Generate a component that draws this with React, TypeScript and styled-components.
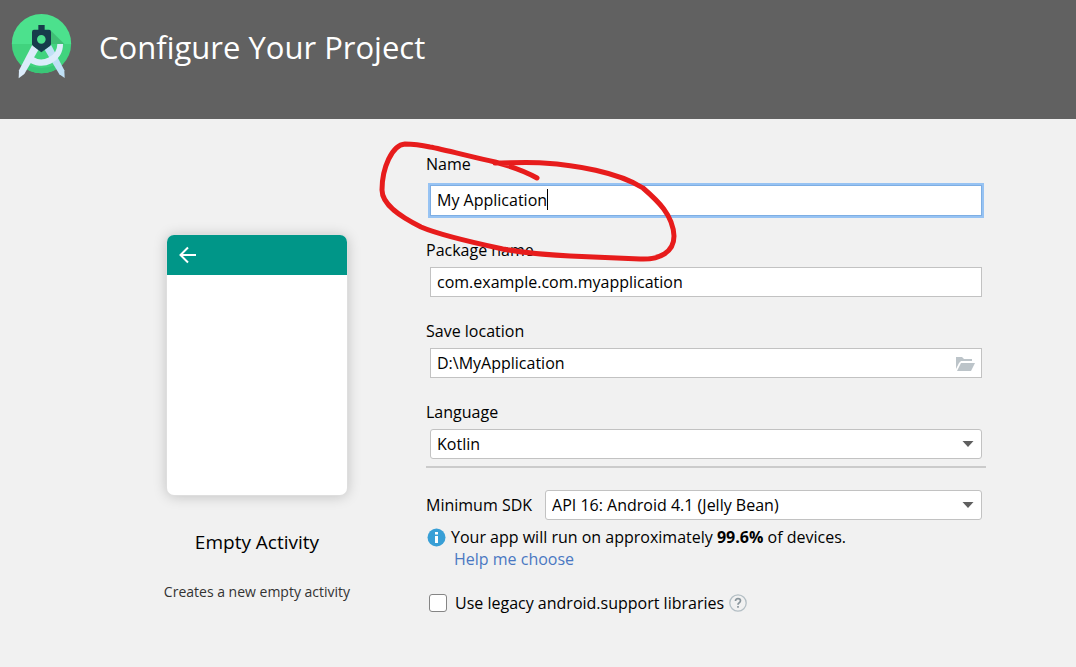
import React from "react";
import styled, { createGlobalStyle, css } from "styled-components";

const GlobalStyle = createGlobalStyle`
  *, *::before, *::after { box-sizing: border-box; }
  html, body, #root { min-height: 100vh; }
  body {
    margin: 0;
    background: #f1f1f1;
    color: #000;
    font: 16px/24px "Open Sans", "Noto Sans", sans-serif;
  }
`;

const Header = styled.header`
  display: flex;
  align-items: flex-start;
  gap: 24px;
  height: 119px;
  padding: 12px 10px;
  background: #616161;
`;

const Title = styled.h1`
  margin: 12px 0 0;
  color: #fff;
  font-size: 31px;
  font-weight: 400;
  line-height: 46px;
`;

const Main = styled.main`
  display: flex;
  gap: 59px;
  padding: 33px 90px 24px 147px;
`;

const Preview = styled.section`
  display: flex;
  flex-direction: column;
  align-items: center;
  flex: 0 0 220px;
  padding-top: 83px;
  text-align: center;
`;

const Phone = styled.div`
  width: 180px;
  height: 260px;
  overflow: hidden;
  border-radius: 7px;
  background: #fff;
  box-shadow: 0 0 0 1px #dedede, 0 1px 14px rgba(0, 0, 0, 0.22);
`;

const PhoneBar = styled.div`
  display: flex;
  align-items: center;
  height: 40px;
  padding-left: 12px;
  background: #009688;
`;

const ActivityName = styled.h2`
  margin: 33px 0 0;
  font-size: 19px;
  font-weight: 400;
  line-height: 28px;
`;

const ActivityNote = styled.p`
  margin: 26px 0 0;
  color: #333;
  font-size: 14px;
  line-height: 20px;
  white-space: nowrap;
`;

const Form = styled.form`
  position: relative;
  display: flex;
  flex-direction: column;
  flex: 1;
  min-width: 0;
`;

const Group = styled.div`
  display: flex;
  flex-direction: column;
  gap: 5px;
  margin-bottom: 22px;

  &:first-child { gap: 9px; }
  &:nth-of-type(4) { margin-bottom: 0; }
`;

const Label = styled.label`
  white-space: nowrap;
`;

const Control = styled.div`
  position: relative;
  display: flex;
  flex: 1;
  min-width: 0;
  margin: 0 4px;
`;

const controlBox = css`
  width: 100%;
  height: 30px;
  padding: 0 6px;
  border: 1px solid #c2c2c2;
  outline: none;
  background: #fff;
  color: #000;
  font: inherit;
`;

const TextInput = styled.input<{ $active?: boolean }>`
  ${controlBox}
  padding-bottom: 1px;
  ${(p) =>
    p.$active &&
    css`
      height: 31px;
      padding-bottom: 2px;
      border-color: #7eaee3;
      box-shadow: 0 0 0 2px #97c3f3;
    `}
`;

const Select = styled.select`
  ${controlBox}
  appearance: none;
  border-radius: 3px;
`;

const Caret = styled.span`
  position: absolute;
  top: 4px;
  left: 117px;
  width: 1px;
  height: 21px;
  background: #000;
`;

const Arrow = styled.svg`
  position: absolute;
  top: 11px;
  right: 8px;
  pointer-events: none;
`;

const BrowseButton = styled.button`
  position: absolute;
  top: 8px;
  right: 7px;
  display: flex;
  padding: 0;
  border: 0;
  background: none;
`;

const Divider = styled.hr`
  width: 100%;
  height: 2px;
  margin: 7px 0 22px;
  border: 0;
  background: #cbcbcb;
`;

const SdkRow = styled.div`
  display: flex;
  align-items: center;
  gap: 9px;
`;

const InfoRow = styled.p`
  display: flex;
  align-items: center;
  gap: 5px;
  margin: 5px 0 0 1px;
`;

const HelpLink = styled.a`
  align-self: flex-start;
  margin-left: 28px;
  color: #4a78c2;
  line-height: 20px;
  text-decoration: none;
`;

const LegacyRow = styled.div`
  display: flex;
  align-items: center;
  margin: 22px 0 0 3px;
`;

const Checkbox = styled.input`
  appearance: none;
  width: 18px;
  height: 18px;
  margin: 0 8px 0 0;
  border: 1px solid #858585;
  border-radius: 3px;
  background: #fff;
`;

const HelpButton = styled.button`
  display: flex;
  margin-left: 5px;
  padding: 0;
  border: 0;
  background: none;
`;

const Scribble = styled.svg`
  position: absolute;
  top: -18px;
  left: -50px;
  pointer-events: none;
`;

const Logo = () => (
  <svg width="65" height="68" viewBox="30 36 195 204" aria-hidden="true">
    <defs>
      <clipPath id="disc">
        <circle cx="124.500" cy="131" r="89" />
      </clipPath>
    </defs>
    <g clipPath="url(#disc)">
      <rect x="30" y="36" width="195" height="96" fill="#4ce18d" />
      <rect x="30" y="132" width="195" height="96" fill="#41d37e" />
      <path d="M153 92L193 132H153Z" fill="#3fbf75" />
      <path d="M84 196Q124 212 164 196L174 214Q124 232 76 212Z" fill="#3ac777" />
    </g>
    <path d="M134 149L153 134 193 211 194 234 178 223Z" fill="#bfe0f5" />
    <path d="M97 134L115 150 73 222 56 235 57 211Z" fill="#dcecfa" />
    <path
      d="M189 132A65 64 0 0 1 84 184L96 169A48 46 0 0 0 172 132Z"
      fill="#dcecfa"
    />
    <path
      fillRule="evenodd"
      d="M115 75H134V89H147Q153 89 153 96V132Q153 136 149 139L124 157 100 139Q96 136 96 132V96Q96 89 102 89H115ZM124 105A13 13 0 1 0 124 131A13 13 0 1 0 124 105Z"
      fill="#173c4b"
    />
  </svg>
);

const DropArrow = () => (
  <Arrow width="12" height="8" viewBox="0 0 12 8" aria-hidden="true">
    <path d="M0.500 1H11.500L6 7Z" fill="#5f5f5f" />
  </Arrow>
);

export default function App() {
  return (
    <>
      <GlobalStyle />
      <Header>
        <Logo />
        <Title>Configure Your Project</Title>
      </Header>
      <Main>
        <Preview>
          <Phone>
            <PhoneBar>
              <svg width="18" height="18" viewBox="0 0 18 18" fill="none" stroke="#fff" strokeWidth="2" aria-hidden="true">
                <path d="M17 9H2.500M9 1.500L1.500 9L9 16.500" />
              </svg>
            </PhoneBar>
          </Phone>
          <ActivityName>Empty Activity</ActivityName>
          <ActivityNote>Creates a new empty activity</ActivityNote>
        </Preview>
        <Form onSubmit={(e) => e.preventDefault()}>
          <Group>
            <Label htmlFor="name">Name</Label>
            <Control>
              <TextInput id="name" $active defaultValue="My Application" />
              <Caret />
            </Control>
          </Group>
          <Group>
            <Label htmlFor="package">Package name</Label>
            <Control>
              <TextInput id="package" defaultValue="com.example.com.myapplication" />
            </Control>
          </Group>
          <Group>
            <Label htmlFor="location">Save location</Label>
            <Control>
              <TextInput id="location" defaultValue={"D:\\MyApplication"} />
              <BrowseButton type="button" aria-label="Browse">
                <svg width="19" height="16" viewBox="0 0 19 16" fill="#bcc4c9" aria-hidden="true">
                  <path d="M0 1H6L8 3H16V5H5L3 7L0 13Z" />
                  <path d="M5 7H19L15 15H1Z" />
                </svg>
              </BrowseButton>
            </Control>
          </Group>
          <Group>
            <Label htmlFor="language">Language</Label>
            <Control>
              <Select id="language" defaultValue="Kotlin">
                <option>Kotlin</option>
                <option>Java</option>
              </Select>
              <DropArrow />
            </Control>
          </Group>
          <Divider />
          <SdkRow>
            <Label htmlFor="sdk">Minimum SDK</Label>
            <Control>
              <Select id="sdk">
                <option>API 16: Android 4.1 (Jelly Bean)</option>
              </Select>
              <DropArrow />
            </Control>
          </SdkRow>
          <InfoRow>
            <svg width="19" height="19" viewBox="0 0 19 19" aria-hidden="true">
              <circle cx="9.500" cy="9.500" r="9" fill="#389fd6" />
              <path d="M8 4H11V6.500H8ZM8 8H11V15H8Z" fill="#fff" />
            </svg>
            <span>
              Your app will run on approximately <b>99.6%</b> of devices.
            </span>
          </InfoRow>
          <HelpLink href="#help">Help me choose</HelpLink>
          <LegacyRow>
            <Checkbox type="checkbox" id="legacy" />
            <Label htmlFor="legacy">Use legacy android.support libraries</Label>
            <HelpButton type="button" aria-label="Help">
              <svg width="18" height="18" viewBox="0 0 18 18" fill="none" aria-hidden="true">
                <circle cx="9" cy="9" r="8.200" stroke="#b4bfc5" strokeWidth="1.300" />
                <path d="M6.500 7Q6.500 4.700 9 4.700Q11.500 4.700 11.500 6.800Q11.500 8 10 8.900Q9 9.500 9 10.800M9 12V13.700" stroke="#89959c" strokeWidth="1.700" />
              </svg>
            </HelpButton>
          </LegacyRow>
          <Scribble width="310" height="136" viewBox="376 134 310 136" fill="none" aria-hidden="true">
            <path
              d="M537 178C525 171 510 166 495 162C472 157 442 149 430 147C421 145 413 144 405 144C392 145 382 168 382 190C382 205 401 217 421 227C442 236 475 243 503 249C530 254 550 255 570 256L640 259C660 260 674 252 674 236C673 215 658 201 643 188C618 172 575 165 543 163C526 162 510 163 495 163"
              stroke="#e71c1c"
              strokeWidth="5"
              strokeLinecap="round"
              strokeLinejoin="round"
            />
          </Scribble>
        </Form>
      </Main>
    </>
  );
}
